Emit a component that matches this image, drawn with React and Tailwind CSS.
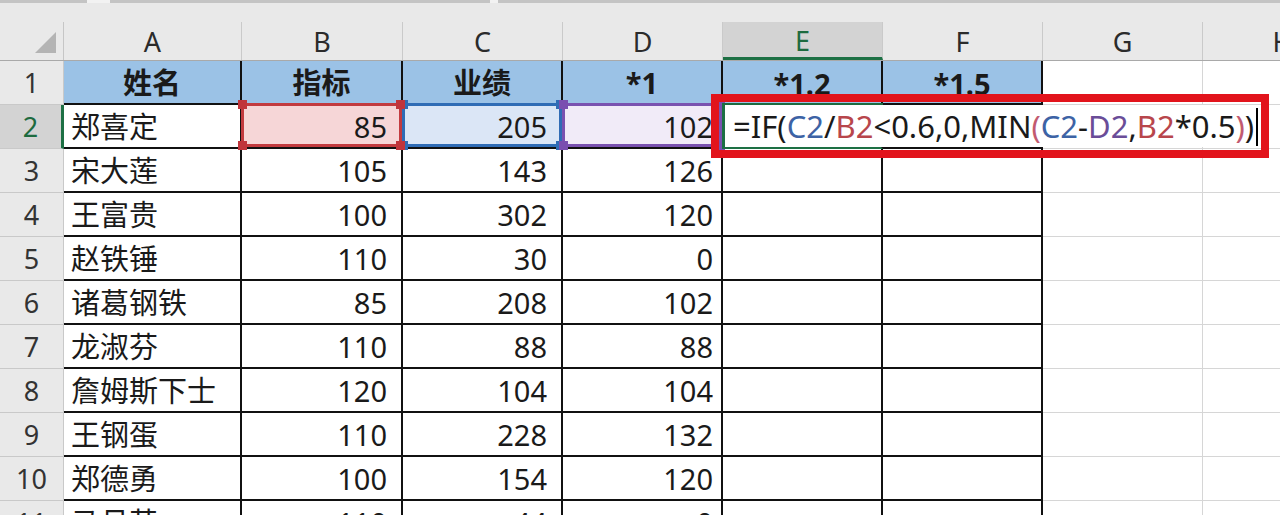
import React from 'react';

const FONT = "font-['Noto_Sans','Noto_Sans_CJK_SC',sans-serif]";

const data = [
  ['宋大莲', '105', '143', '126'],
  ['王富贵', '100', '302', '120'],
  ['赵铁锤', '110', '30', '0'],
  ['诸葛钢铁', '85', '208', '102'],
  ['龙淑芬', '110', '88', '88'],
  ['詹姆斯下士', '120', '104', '104'],
  ['王钢蛋', '110', '228', '132'],
  ['郑德勇', '100', '154', '120'],
  ['马月英', '110', '44', '0'],
];

const tbl = 'shrink-0 border-r-2 border-b-2 border-[#111]';
const grid = 'shrink-0 bg-white border-r border-b border-[#d6d6d6]';

function RowHdr({ n }) {
  return (
    <div className="w-[64px] shrink-0 flex items-center justify-center border-r border-b border-[#c9c9c9] text-[27px] text-[#333] pt-[2px]">
      {n}
    </div>
  );
}

function Handle({ pos, color }) {
  return <div className={`absolute w-[9px] h-[9px] ${pos} ${color}`} />;
}

function RefBox({ border, fill, z }) {
  return (
    <div className={`absolute -left-[1px] -right-[1px] -top-[2px] bottom-0 border-[3px] ${border} ${z}`}>
      <Handle pos="-left-[6px] -top-[6px]" color={fill} />
      <Handle pos="-right-[6px] -top-[6px]" color={fill} />
      <Handle pos="-left-[6px] -bottom-[6px]" color={fill} />
      <Handle pos="-right-[6px] -bottom-[6px]" color={fill} />
    </div>
  );
}

export default function App() {
  return (
    <div className={`w-[1280px] h-[515px] overflow-hidden bg-[#e9e9e9] relative ${FONT} text-[#1a1a1a]`}>
      {/* top strip */}
      <div className="flex h-[3px]">
        <div className="w-[87px] bg-[#c4c4c4]" />
        <div className="w-[23px] bg-[#f2f2f2]" />
        <div className="w-[380px] bg-[#c4c4c4]" />
        <div className="w-[8px] bg-[#f2f2f2]" />
        <div className="flex-1 bg-[#c4c4c4]" />
      </div>
      <div className="h-[19px]" />

      {/* column header */}
      <div className="flex h-[39px] border-b border-[#a9a9a9]">
        <div className="w-[64px] shrink-0 border-r border-[#c6c6c6] flex items-end justify-end pr-[7px] pb-[7px]">
          <svg width="21" height="21" viewBox="0 0 21 21">
            <polygon points="21,0 21,21 0,21" fill="#b4b4b4" />
          </svg>
        </div>
        <div className="w-[178px] shrink-0 flex items-center justify-center border-r border-[#cacaca] text-[27px] text-[#2b2b2b] pt-[3px]">A</div>
        <div className="w-[161px] shrink-0 flex items-center justify-center border-r border-[#cacaca] text-[27px] text-[#2b2b2b] pt-[3px]">B</div>
        <div className="w-[160px] shrink-0 flex items-center justify-center border-r border-[#cacaca] text-[27px] text-[#2b2b2b] pt-[3px]">C</div>
        <div className="w-[160px] shrink-0 flex items-center justify-center border-r border-[#cacaca] text-[27px] text-[#2b2b2b] pt-[3px]">D</div>
        <div className="w-[160px] shrink-0 flex items-center justify-center border-r border-[#cacaca] bg-[#d3d3d3] border-b-[3px] border-b-[#1d7044] text-[27px] text-[#1d6b3f] pt-[3px]">E</div>
        <div className="w-[160px] shrink-0 flex items-center justify-center border-r border-[#cacaca] text-[27px] text-[#2b2b2b] pt-[3px]">F</div>
        <div className="w-[160px] shrink-0 flex items-center justify-center border-r border-[#cacaca] text-[27px] text-[#2b2b2b] pt-[3px]">G</div>
        <div className="w-[160px] shrink-0 flex items-center justify-center border-r border-[#cacaca] text-[27px] text-[#2b2b2b] pt-[3px]">H</div>
      </div>

      {/* row 1 */}
      <div className="flex h-[44px]">
        <RowHdr n="1" />
        <div className={`w-[178px] ${tbl} bg-[#9bc2e6] flex items-center justify-center font-bold text-[29px] pt-[1px]`}>姓名</div>
        <div className={`w-[161px] ${tbl} bg-[#9bc2e6] flex items-center justify-center font-bold text-[29px] pt-[1px]`}>指标</div>
        <div className={`w-[160px] ${tbl} bg-[#9bc2e6] flex items-center justify-center font-bold text-[29px] pt-[1px]`}>业绩</div>
        <div className={`w-[160px] ${tbl} bg-[#9bc2e6] flex items-center justify-center font-bold text-[29px] pt-[1px]`}>*1</div>
        <div className={`w-[160px] ${tbl} bg-[#9bc2e6] flex items-center justify-center font-bold text-[29px] pt-[4px]`}>*1.2</div>
        <div className={`w-[160px] ${tbl} bg-[#9bc2e6] flex items-center justify-center font-bold text-[29px] pt-[4px]`}>*1.5</div>
        <div className={`w-[160px] ${grid}`} />
        <div className={`w-[160px] ${grid}`} />
      </div>

      {/* row 2 */}
      <div className="flex h-[44px]">
        <div className="w-[64px] shrink-0 flex items-center justify-center bg-[#d3d3d3] border-b border-[#c9c9c9] border-r-[3px] border-r-[#1d7044] text-[27px] text-[#1d6b3f] pt-[2px]">
          2
        </div>
        <div className={`w-[178px] ${tbl} bg-white flex items-center pl-[7px] text-[29px] pt-[2px]`}>郑喜定</div>
        <div className={`w-[161px] ${tbl} relative bg-[#f6d6d7] flex items-center justify-end pr-[14px] text-[29px] pt-[2px]`}>
          85
          <RefBox border="border-[#c23b3f]" fill="bg-[#c0353b]" z="z-20" />
        </div>
        <div className={`w-[160px] ${tbl} relative bg-[#dbe6f6] flex items-center justify-end pr-[14px] text-[29px] pt-[2px]`}>
          205
          <RefBox border="border-[#2f6cb5]" fill="bg-[#2f6cb5]" z="z-10" />
        </div>
        <div className={`w-[160px] ${tbl} relative bg-[#f1ebf8] flex items-center justify-end pr-[8px] text-[29px] pt-[2px]`}>
          102
          <RefBox border="border-[#7a52b0]" fill="bg-[#7a4fb0]" z="z-20" />
        </div>
        <div className="w-[160px] shrink-0 relative bg-white border-r-2 border-r-[#111] border-b-2 border-b-[#1d7044]">
          <div className="absolute -left-[1px] -top-[2px] w-[3px] h-[46px] bg-[#1d7044] z-30" />
          <div className="absolute left-0 -top-[2px] w-[160px] h-[2px] bg-[#1d6b3f] z-30" />
          <div className="absolute left-[3px] top-0 h-[42px] w-[536px] bg-white z-30 flex items-center pl-[7px] text-[31px] leading-none whitespace-nowrap pt-[1px]">
            <span>=IF(</span>
            <span className="text-[#3d63a5]">C2</span>
            <span>/</span>
            <span className="text-[#b8464c]">B2</span>
            <span>&lt;0.6,0,MIN</span>
            <span className="text-[#c25a70]">(</span>
            <span className="text-[#3d63a5]">C2</span>
            <span>-</span>
            <span className="text-[#6a4d98]">D2</span>
            <span>,</span>
            <span className="text-[#b8464c]">B2</span>
            <span>*0.5</span>
            <span className="text-[#c25a70]">)</span>
            <span>)</span>
            <span className="ml-[2px] w-[2px] h-[38px] bg-black" />
          </div>
        </div>
        <div className={`w-[160px] ${tbl} bg-white`} />
        <div className={`w-[160px] ${grid}`} />
        <div className={`w-[160px] ${grid}`} />
      </div>

      {/* rows 3-11 */}
      {data.map((r, i) => (
        <div key={i} className="flex h-[44px]">
          <RowHdr n={i + 3} />
          <div className={`w-[178px] ${tbl} bg-white flex items-center pl-[7px] text-[29px] pt-[2px] whitespace-nowrap`}>{r[0]}</div>
          <div className={`w-[161px] ${tbl} bg-white flex items-center justify-end pr-[14px] text-[29px] pt-[2px]`}>{r[1]}</div>
          <div className={`w-[160px] ${tbl} bg-white flex items-center justify-end pr-[14px] text-[29px] pt-[2px]`}>{r[2]}</div>
          <div className={`w-[160px] ${tbl} bg-white flex items-center justify-end pr-[8px] text-[29px] pt-[2px]`}>{r[3]}</div>
          <div className={`w-[160px] ${tbl} bg-white`} />
          <div className={`w-[160px] ${tbl} bg-white`} />
          <div className={`w-[160px] ${grid}`} />
          <div className={`w-[160px] ${grid}`} />
        </div>
      ))}

      {/* red annotation box */}
      <div className="absolute left-[711px] top-[94px] w-[558px] h-[64px] border-[8px] border-[#e2141c] z-50" />
    </div>
  );
}
